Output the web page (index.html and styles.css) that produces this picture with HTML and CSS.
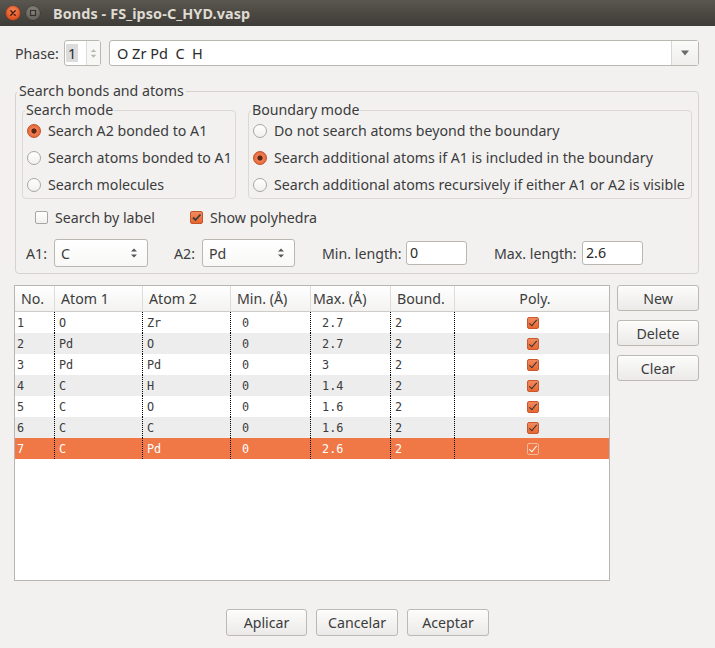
FILE: index.html
```html
<!DOCTYPE html>
<html>
<head>
<meta charset="utf-8">
<link rel="stylesheet" href="styles.css">
</head>
<body>
<div class="window">
  <div class="titlebar">
    <span class="wbtn wclose"><svg width="14" height="14" viewBox="0 0 14 14"><path d="M4.8 4.8 L9.2 9.2 M9.2 4.8 L4.8 9.2" stroke="#4a1c0a" stroke-width="1.4" stroke-linecap="round"/></svg></span>
    <span class="wbtn wmax"><svg width="14" height="14" viewBox="0 0 14 14"><rect x="4.5" y="4.5" width="5" height="5" fill="none" stroke="#33312d" stroke-width="1.2"/></svg></span>
    <span class="title">Bonds - FS_ipso-C_HYD.vasp</span>
  </div>
  <div class="content">
    <div class="phase-row">
      <span class="lbl phase-lbl">Phase:</span>
      <div class="spin">
        <span class="spin-val"><span class="sel">1</span></span>
        <span class="spin-arrows"><svg width="14" height="24" viewBox="0 0 14 24"><path d="M4 11 L7 8 L10 11 Z" fill="#b9b7b2"/><path d="M4 14 L7 17 L10 14 Z" fill="#b9b7b2"/></svg></span>
      </div>
      <div class="combo-entry">
        <span class="ce-text">O Zr Pd  C  H</span>
        <span class="ce-btn"><svg width="10" height="6" viewBox="0 0 10 6"><path d="M1 0.5 L9 0.5 L5 5.5 Z" fill="#6a6a68"/></svg></span>
      </div>
    </div>

    <fieldset class="group outer">
      <legend>Search bonds and atoms</legend>
      <div class="modes">
        <fieldset class="group sub search-mode">
          <legend>Search mode</legend>
          <div class="opt"><span class="radio on"></span><span>Search A2 bonded to A1</span></div>
          <div class="opt"><span class="radio"></span><span>Search atoms bonded to A1</span></div>
          <div class="opt"><span class="radio"></span><span>Search molecules</span></div>
        </fieldset>
        <fieldset class="group sub boundary-mode">
          <legend>Boundary mode</legend>
          <div class="opt"><span class="radio"></span><span>Do not search atoms beyond the boundary</span></div>
          <div class="opt"><span class="radio on"></span><span>Search additional atoms if A1 is included in the boundary</span></div>
          <div class="opt"><span class="radio"></span><span>Search additional atoms recursively if either A1 or A2 is visible</span></div>
        </fieldset>
      </div>
      <div class="checks">
        <div class="check-item first"><span class="cbox"></span><span>Search by label</span></div>
        <div class="check-item"><span class="cbox on"><svg width="13" height="13" viewBox="0 0 13 13"><path d="M3 6.5 L5.5 9 L10.5 3.5" fill="none" stroke="#3b3b3b" stroke-width="1.8"/></svg></span><span>Show polyhedra</span></div>
      </div>
      <div class="params">
        <div class="pgroup g1"><span class="plbl w-a">A1:</span><div class="combo w94"><span>C</span><svg width="8" height="12" viewBox="0 0 8 12"><path d="M1 4.5 L4 1.5 L7 4.5 Z M1 7.5 L4 10.5 L7 7.5 Z" fill="#555"/></svg></div></div>
        <div class="pgroup g2"><span class="plbl w-a">A2:</span><div class="combo w93"><span>Pd</span><svg width="8" height="12" viewBox="0 0 8 12"><path d="M1 4.5 L4 1.5 L7 4.5 Z M1 7.5 L4 10.5 L7 7.5 Z" fill="#555"/></svg></div></div>
        <div class="pgroup g3"><span class="plbl w-min">Min. length:</span><div class="entry">0</div></div>
        <div class="pgroup g4"><span class="plbl w-max">Max. length:</span><div class="entry">2.6</div></div>
      </div>
    </fieldset>

    <div class="table-area">
      <div class="tablebox">
        <table>
          <colgroup><col class="c-no"><col class="c-a"><col class="c-a"><col class="c-m"><col class="c-m"><col class="c-b"><col></colgroup>
          <thead>
            <tr><th class="h-no">No.</th><th>Atom 1</th><th>Atom 2</th><th class="h-min">Min. (Å)</th><th class="h-max">Max. (Å)</th><th>Bound.</th><th class="h-poly">Poly.</th></tr>
          </thead>
          <tbody>
            <tr><td>1</td><td>O</td><td>Zr</td><td> 0</td><td> 2.7</td><td>2</td><td class="pc"><span class="pbox"></span></td></tr>
            <tr class="alt"><td>2</td><td>Pd</td><td>O</td><td> 0</td><td> 2.7</td><td>2</td><td class="pc"><span class="pbox"></span></td></tr>
            <tr><td>3</td><td>Pd</td><td>Pd</td><td> 0</td><td> 3</td><td>2</td><td class="pc"><span class="pbox"></span></td></tr>
            <tr class="alt"><td>4</td><td>C</td><td>H</td><td> 0</td><td> 1.4</td><td>2</td><td class="pc"><span class="pbox"></span></td></tr>
            <tr><td>5</td><td>C</td><td>O</td><td> 0</td><td> 1.6</td><td>2</td><td class="pc"><span class="pbox"></span></td></tr>
            <tr class="alt"><td>6</td><td>C</td><td>C</td><td> 0</td><td> 1.6</td><td>2</td><td class="pc"><span class="pbox"></span></td></tr>
            <tr class="selrow"><td>7</td><td>C</td><td>Pd</td><td> 0</td><td> 2.6</td><td>2</td><td class="pc"><span class="pbox"></span></td></tr>
          </tbody>
        </table>
      </div>
      <div class="side-btns">
        <button class="btn">New</button>
        <button class="btn">Delete</button>
        <button class="btn">Clear</button>
      </div>
    </div>

    <div class="dialog-btns">
      <button class="btn b81">Aplicar</button>
      <button class="btn b82">Cancelar</button>
      <button class="btn b82">Aceptar</button>
    </div>
  </div>
</div>
</body>
</html>
```

FILE: styles.css
```css
* { box-sizing: border-box; }
html, body { margin: 0; padding: 0; }
body {
  background: #f2f1f0;
  font-family: "Noto Sans", "Open Sans", sans-serif;
  font-size: 14.2px;
  color: #3c3c3c;
}
.window { width: 715px; height: 648px; overflow: hidden; background: #f2f1f0; }

.titlebar {
  height: 26px;
  background: linear-gradient(#5a5650, #3e3c37);
  display: flex;
  align-items: center;
  padding-left: 6px;
}
.wbtn {
  width: 14px; height: 14px; border-radius: 50%;
  display: flex; align-items: center; justify-content: center;
}
.wclose {
  background: radial-gradient(circle at 50% 35%, #f58a5c, #e2501f 70%);
  box-shadow: 0 0 0 0.5px #9c3a14;
}
.wmax {
  margin-left: 6px;
  background: radial-gradient(circle at 50% 35%, #8a877f, #67645d 70%);
  box-shadow: 0 0 0 0.5px #34322e;
}
.title {
  margin-left: 13px;
  color: #dfdbd2;
  font-weight: bold;
  font-size: 14.4px;
  letter-spacing: 0.1px;
}

.content { padding: 14px 16px 0 15px; }

.phase-row { display: flex; align-items: center; height: 26px; }
.phase-lbl { width: 49px; }
.spin {
  width: 37px; height: 26px;
  border: 1px solid #bab7b1; border-radius: 3px;
  background: #fff;
  display: flex;
}
.spin-val { width: 22px; display: flex; align-items: center; padding-left: 1px; }
.sel { background: #dcdcdc; padding: 0 2px; line-height: 18px; font-size: 14.5px; color: #2a2a2a; }
.spin-arrows { border-left: 1px solid #dedcd8; background: #f7f7f6; width: 14px; display: flex; }
.combo-entry {
  margin-left: 8px; flex: 1; height: 26px;
  border: 1px solid #bab7b1; border-radius: 3px;
  background: #fff;
  display: flex; align-items: center;
}
.ce-text { flex: 1; padding-left: 7px; white-space: pre; font-size: 14.5px; color: #2a2a2a; }
.ce-btn {
  width: 27px; height: 100%;
  border-left: 1px solid #d9d6d1;
  background: linear-gradient(#fafaf9, #efeeec);
  display: flex; align-items: center; justify-content: center;
}

fieldset.group { margin: 0; min-width: 0; border-radius: 4px; }
fieldset.outer {
  margin-top: 17px;
  border: 1px solid #d6d3ce;
  padding: 4px 6px 6px 6px;
}
fieldset.outer > legend {
  padding: 0 2px; margin-left: -5px; line-height: 16px;
}
.modes { display: flex; gap: 12px; }
fieldset.sub {
  border: 1px solid #dcd9d4;
  padding: 0 4px 0 4px;
}
fieldset.sub > legend { padding: 0 1px; margin-left: -2px; line-height: 14px; }
.search-mode { width: 214px; flex: none; }
.boundary-mode { flex: 1; padding-left: 5px; }
.opt { height: 27px; display: flex; align-items: center; gap: 7px; white-space: nowrap; }

.radio {
  width: 14px; height: 14px; border-radius: 50%; flex: none;
  border: 1px solid #a9a6a0;
  background: linear-gradient(#ffffff, #f1f0ee);
}
.radio.on {
  border-color: #c0502a;
  background: radial-gradient(circle, #5b2714 0 2.2px, #f08158 3px, #e6622f 7px);
}

.checks { display: flex; align-items: center; height: 18px; margin-top: 9px; padding-left: 13px; }
.check-item { display: flex; align-items: center; gap: 7px; }
.check-item.first { width: 155px; }
.cbox {
  width: 13px; height: 13px; border-radius: 2px; flex: none;
  border: 1px solid #a9a6a0; background: linear-gradient(#fff, #f1f0ee);
  display: flex;
}
.cbox.on { border-color: #c2552b; background: linear-gradient(#f28a5e, #e8662f); }
.cbox svg { margin: -1px; }

.params { display: flex; align-items: center; height: 28px; margin-top: 13px; padding-left: 4px; }
.pgroup { display: flex; align-items: center; }
.g2 { margin-left: 26px; }
.g3, .g4 { margin-left: 27px; }
.w-a { width: 28px; }
.w-min { width: 84px; }
.w-max { width: 88px; }
.combo {
  height: 28px; border: 1px solid #bab7b1; border-radius: 3px;
  background: linear-gradient(#ffffff, #f8f8f7);
  display: flex; align-items: center; justify-content: space-between;
  padding: 0 9px 0 6px;
}
.w94 { width: 94px; }
.w93 { width: 93px; }
.entry {
  width: 61px; height: 24px; border: 1px solid #bab7b1; border-radius: 3px;
  background: #fff; padding-left: 3px; line-height: 22px; color: #2a2a2a;
}

.table-area { display: flex; margin-top: 11px; margin-left: -1px; gap: 7px; }
.tablebox {
  width: 596px; height: 296px;
  border: 1px solid #b9b6b1;
  background: #fff;
}
table { width: 100%; table-layout: fixed; border-collapse: separate; border-spacing: 0; }
col.c-no { width: 39px; }
col.c-a { width: 88px; }
col.c-m { width: 80px; }
col.c-b { width: 64px; }
th {
  height: 26px; font-weight: normal; text-align: left;
  background: linear-gradient(#ffffff, #f3f2f1);
  border-bottom: 1px solid #cfccc7;
  padding: 0 0 0 6px;
  white-space: nowrap; overflow: hidden;
  color: #3c3c3c;
}
th + th { border-left: 1px solid #dedbd6; }
th.h-no { padding-left: 6px; }
th.h-max { padding-left: 2px; }
th.h-poly { text-align: center; }
td {
  height: 21px; padding: 0 0 0 4px;
  font-family: "DejaVu Sans Mono", "Liberation Mono", monospace;
  font-size: 11.8px; color: #3c3c3c;
  white-space: pre; overflow: hidden;
}
td:first-child { padding-left: 2px; }
td + td { border-left: 1px dotted #000; }
tr.alt td { background: #ededed; }
tr.selrow td { background: #f07746; color: #fff; }
td.pc { text-align: center; padding-left: 2px; }
.pbox {
  display: inline-block; width: 12px; height: 12px; vertical-align: middle;
  border: 1px solid #c9582c; border-radius: 2px;
  background: linear-gradient(#f2895e, #e9672f);
  position: relative;
}
.pbox::after {
  content: ""; position: absolute; left: 3px; top: 0px;
  width: 3px; height: 7px;
  border: solid #333; border-width: 0 1.8px 1.8px 0;
  transform: rotate(40deg);
}
tr.selrow .pbox { border-color: #f7b79b; background: transparent; }
tr.selrow .pbox::after { border-color: #fff; }

.side-btns { display: flex; flex-direction: column; gap: 9px; }
.btn {
  font-family: "Noto Sans", "Open Sans", sans-serif;
  font-size: 14.2px; color: #3c3c3c;
  border: 1px solid #bcb8b2; border-radius: 3px;
  background: linear-gradient(#fcfcfb, #ebeae8);
  box-shadow: inset 0 1px 0 #fff;
  padding: 0;
}
.side-btns .btn { width: 82px; height: 26px; }

.dialog-btns {
  display: flex; justify-content: center; gap: 9px;
  margin-top: 28px; margin-left: -15px; margin-right: -16px;
}
.dialog-btns .btn { height: 27px; }
.b81 { width: 81px; }
.b82 { width: 82px; }
```
